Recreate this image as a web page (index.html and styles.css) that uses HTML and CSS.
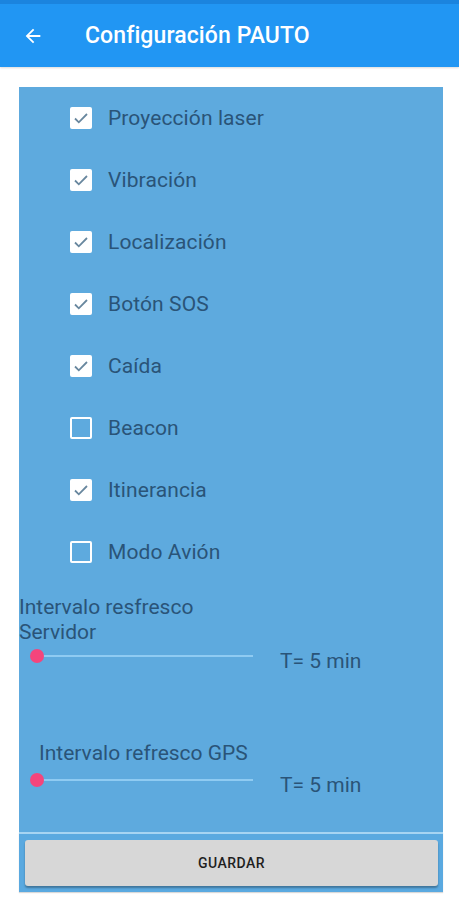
FILE: index.html
```html
<!DOCTYPE html>
<html lang="es">
<head>
<meta charset="utf-8">
<title>Configuración PAUTO</title>
<link rel="stylesheet" href="styles.css">
</head>
<body>
<header class="appbar">
  <svg class="back" width="20" height="20" viewBox="0 0 24 24"><path d="M20 11H7.83l5.59-5.59L12 4l-8 8 8 8 1.41-1.41L7.83 13H20v-2z" fill="#fff"/></svg>
  <h1 class="title">Configuración PAUTO</h1>
</header>
<main class="content">
  <section class="panel">
    <ul class="options">
      <li class="option"><span class="box checked"><svg viewBox="0 0 22 22"><path d="M5 11.5l3.8 3.8L17 7" fill="none" stroke="#68879e" stroke-width="1.8"/></svg></span>Proyección laser</li>
      <li class="option"><span class="box checked"><svg viewBox="0 0 22 22"><path d="M5 11.5l3.8 3.8L17 7" fill="none" stroke="#68879e" stroke-width="1.8"/></svg></span>Vibración</li>
      <li class="option"><span class="box checked"><svg viewBox="0 0 22 22"><path d="M5 11.5l3.8 3.8L17 7" fill="none" stroke="#68879e" stroke-width="1.8"/></svg></span>Localización</li>
      <li class="option"><span class="box checked"><svg viewBox="0 0 22 22"><path d="M5 11.5l3.8 3.8L17 7" fill="none" stroke="#68879e" stroke-width="1.8"/></svg></span>Botón SOS</li>
      <li class="option"><span class="box checked"><svg viewBox="0 0 22 22"><path d="M5 11.5l3.8 3.8L17 7" fill="none" stroke="#68879e" stroke-width="1.8"/></svg></span>Caída</li>
      <li class="option"><span class="box"></span>Beacon</li>
      <li class="option"><span class="box checked"><svg viewBox="0 0 22 22"><path d="M5 11.5l3.8 3.8L17 7" fill="none" stroke="#68879e" stroke-width="1.8"/></svg></span>Itinerancia</li>
      <li class="option"><span class="box"></span>Modo Avión</li>
    </ul>
    <div class="setting first">
      <p class="label wrap">Intervalo resfresco Servidor</p>
      <div class="slider-row">
        <div class="slider"><span class="track"></span><span class="thumb"></span></div>
        <span class="value">T= 5 min</span>
      </div>
    </div>
    <div class="setting second">
      <p class="label indent">Intervalo refresco GPS</p>
      <div class="slider-row">
        <div class="slider"><span class="track"></span><span class="thumb"></span></div>
        <span class="value">T= 5 min</span>
      </div>
    </div>
  </section>
  <div class="actions">
    <button class="save">GUARDAR</button>
  </div>
</main>
</body>
</html>
```
FILE: styles.css
```css
* { box-sizing: border-box; }
html, body { margin: 0; padding: 0; }
body {
  width: 459px;
  height: 900px;
  background: #ffffff;
  font-family: Roboto, "Noto Sans", sans-serif;
  overflow: hidden;
}
.appbar {
  height: 67px;
  background: #2196f3;
  border-top: 4px solid #1b84de;
  display: flex;
  align-items: center;
  padding-left: 22px;
  box-shadow: 0 1px 2px rgba(0,0,0,0.15);
}
.back { width: 22px; height: 22px; }
.title {
  margin: 0 0 0 41px;
  color: #fff;
  font-size: 23px;
  font-weight: 500;
  letter-spacing: 0.1px;
}
.content {
  padding: 20px 16px 0 19px;
}
.panel {
  width: 424px;
  background: #5eaade;
  height: 745px;
  color: #2a5478;
}
.options {
  list-style: none;
  margin: 0;
  padding: 0 0 0 51px;
}
.option {
  height: 62px;
  display: flex;
  align-items: center;
  font-size: 21px;
  letter-spacing: 0.1px;
}
.box {
  width: 22px;
  height: 22px;
  border: 2px solid #ffffff;
  border-radius: 2px;
  margin-right: 16px;
  flex: none;
}
.box.checked { background: #ffffff; border: none; }
.box svg { display: block; width: 22px; height: 22px; }
.setting.first { padding-top: 12px; }
.setting.second { padding-top: 66px; }
.label {
  margin: 0;
  font-size: 21px;
  line-height: 25px;
}
.label.wrap { width: 200px; }
.label.indent { padding-left: 20px; }
.slider-row {
  display: flex;
  align-items: center;
  height: 30px;
}
.setting.second .slider-row { margin-top: 3px; }
.slider {
  position: relative;
  width: 223px;
  height: 16px;
  margin-left: 11px;
  margin-top: -9px;
}
.track {
  position: absolute;
  left: 7px;
  right: 0;
  top: 7px;
  height: 2px;
  background: #8fcbf2;
}
.thumb {
  position: absolute;
  left: 0;
  top: 1px;
  width: 14px;
  height: 14px;
  border-radius: 50%;
  background: #f4457c;
}
.value {
  margin-left: 27px;
  font-size: 21px;
  margin-top: 1px;
}
.actions {
  width: 424px;
  height: 60px;
  background: #5aa9e0;
  border-top: 2px solid #a6d4f2;
  padding: 6px 5px 6px 6px;
  box-shadow: 0 1px 1px rgba(0,0,0,0.15);
}
.save {
  width: 100%;
  height: 46px;
  border: none;
  border-radius: 3px;
  background: #d7d7d7;
  box-shadow: 0 2px 2px rgba(0,0,0,0.3);
  font-family: Roboto, "Noto Sans", sans-serif;
  font-weight: 500;
  font-size: 14px;
  letter-spacing: 0.5px;
  color: #1f1f1f;
  padding: 0;
}
```
